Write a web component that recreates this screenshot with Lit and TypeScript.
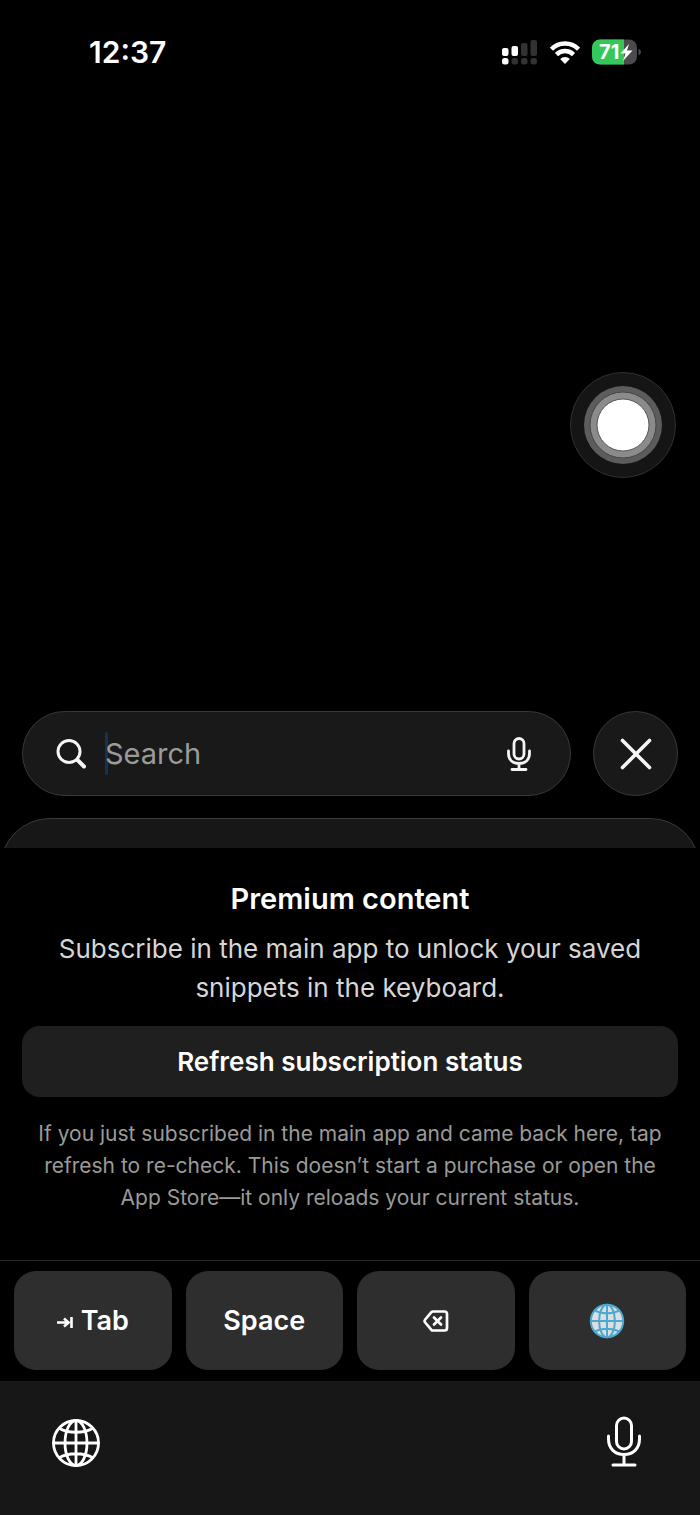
import { LitElement, html, css, svg } from "lit";
import { customElement, state } from "lit/decorators.js";

const micShape = svg`
  <rect x="10.500" y="2" width="15" height="31" rx="7.500"></rect>
  <path d="M2.500 20v3c0 9.500 6.500 15.500 15.500 15.500s15.500-6 15.500-15.500v-3M18 38.500v10M7 49h22"></path>`;

const globeLines = svg`
  <circle cx="25" cy="25" r="22.500"></circle>
  <ellipse cx="25" cy="25" rx="11" ry="22.500"></ellipse>
  <path d="M25 2.500v45M2.500 25h45M8.500 10.500c9 5 24 5 33 0M8.500 39.500c9-5 24-5 33 0"></path>`;

@customElement("status-bar")
export class StatusBar extends LitElement {
  static styles = css`
    :host {
      display: flex;
      justify-content: space-between;
      align-items: center;
      padding: 32px 59px 0 89px;
      height: 40px;
    }
    .time {
      font-size: 30px;
      font-weight: 600;
    }
    .indicators {
      display: flex;
      align-items: center;
      gap: 12px;
    }
    .battery {
      position: relative;
      width: 49px;
      height: 26px;
    }
    .battery svg,
    .signal,
    .wifi {
      display: block;
    }
    .level {
      position: absolute;
      inset: 0 auto 0 7px;
      font-size: 20px;
      line-height: 26px;
      font-weight: 700;
    }
  `;

  render() {
    return html`
      <span class="time">12:37</span>
      <div class="indicators">
        <svg class="signal" width="36" height="26" viewBox="0 0 36 26" fill="#323234" aria-label="Signal">
          <rect x="0" y="9" width="6.500" height="8" rx="2" fill="#fff"></rect>
          <rect x="9.500" y="7" width="6.500" height="10" rx="2" fill="#fff"></rect>
          <rect x="19" y="4" width="6.500" height="13" rx="2"></rect>
          <rect x="28.500" y="1" width="6.500" height="16" rx="2"></rect>
          <rect x="0" y="19" width="6.500" height="6.500" rx="2.500" fill="#fff"></rect>
          <rect x="9.500" y="19" width="6.500" height="6.500" rx="2.500"></rect>
          <rect x="19" y="19" width="6.500" height="6.500" rx="2.500"></rect>
          <rect x="28.500" y="19" width="6.500" height="6.500" rx="2.500"></rect>
        </svg>
        <svg class="wifi" width="30" height="24" viewBox="0 0 30 24" fill="none" stroke="#fff" stroke-width="4.400" aria-label="Wi-Fi">
          <path d="M1.500 9.200a19 19 0 0 1 27 0"></path>
          <path d="M6.500 14.600a12 12 0 0 1 17 0"></path>
          <path d="M15 24l-4.800-5a6.500 6.500 0 0 1 9.600 0z" fill="#fff" stroke="none"></path>
        </svg>
        <div class="battery">
          <svg width="49" height="26" viewBox="0 0 49 26" aria-hidden="true">
            <defs>
              <clipPath id="cell"><rect x="0" y="0.500" width="45" height="25" rx="8"></rect></clipPath>
            </defs>
            <g clip-path="url(#cell)">
              <rect width="45" height="26" fill="#4b4b4d"></rect>
              <rect width="32" height="26" fill="#34c759"></rect>
            </g>
            <path d="M46.500 9.500q2.500 1 2.500 3.500t-2.500 3.500z" fill="#4b4b4d"></path>
            <path d="M37 5l-8.500 9.500h5l-2.500 7.500 9.500-10.500h-5.500z" fill="#fff"></path>
          </svg>
          <span class="level">71</span>
        </div>
      </div>
    `;
  }
}

@customElement("search-bar")
export class SearchBar extends LitElement {
  @state() private query = "";

  static styles = css`
    :host {
      display: flex;
      gap: 22px;
      padding: 0 22px;
    }
    .field {
      flex: 1;
      min-width: 0;
      display: flex;
      align-items: center;
      gap: 17px;
      height: 85px;
      box-sizing: border-box;
      padding: 0 38px 0 33px;
      border: 1px solid #39393a;
      border-radius: 43px;
      background: #191919;
    }
    .entry {
      position: relative;
      flex: 1;
      min-width: 0;
      display: flex;
    }
    .caret {
      position: absolute;
      left: 0;
      top: 0;
      width: 3px;
      height: 43px;
      border-radius: 2px;
      background: #123450;
    }
    .input {
      position: relative;
      width: 100%;
      height: 43px;
      padding: 0;
      border: 0;
      outline: 0;
      background: none;
      color: #fff;
      font: 400 29px Inter, sans-serif;
    }
    .input::placeholder {
      color: #9b9b9b;
      opacity: 1;
    }
    .button {
      display: grid;
      place-items: center;
      padding: 0;
      border: 0;
      background: none;
      color: #f5f5f5;
    }
    .close {
      width: 85px;
      height: 85px;
      border: 1px solid #39393a;
      border-radius: 50%;
      background: #191919;
    }
    .icon {
      display: block;
      flex: none;
      fill: none;
      stroke: #f5f5f5;
      stroke-linecap: round;
    }
  `;

  render() {
    return html`
      <div class="field">
        <svg class="icon" width="32" height="32" viewBox="0 0 32 32" stroke-width="3" aria-hidden="true">
          <circle cx="13" cy="13.500" r="11"></circle>
          <path d="M21.500 22l6.500 6.500" stroke-width="4"></path>
        </svg>
        <div class="entry">
          <span class="caret"></span>
          <input
            class="input"
            type="text"
            aria-label="Search"
            placeholder="Search"
            .value=${this.query}
            @input=${(e: Event) => (this.query = (e.target as HTMLInputElement).value)}
          />
        </div>
        <button class="button" aria-label="Dictate search">
          <svg class="icon" width="26" height="36" viewBox="0 0 26 36" stroke-width="2.800">
            <rect x="8" y="2.500" width="10" height="20.500" rx="5"></rect>
            <path d="M2.500 15v2.500c0 6 4 10 10.500 10s10.500-4 10.500-10V15M13 27.500v5.500M6 33.500h14"></path>
          </svg>
        </button>
      </div>
      <button class="button close" aria-label="Close" @click=${() => (this.query = "")}>
        <svg class="icon" width="32" height="32" viewBox="0 0 32 32" stroke-width="3.600">
          <path d="M2.500 2.500l27 27M29.500 2.500l-27 27"></path>
        </svg>
      </button>
    `;
  }
}

@customElement("premium-panel")
export class PremiumPanel extends LitElement {
  static styles = css`
    :host {
      display: flex;
      flex-direction: column;
      padding: 32px 22px 46px;
      text-align: center;
    }
    .title {
      margin: 0 0 11px;
      font-size: 29px;
      line-height: 38px;
      font-weight: 600;
    }
    .lead {
      margin: 0 auto 19px;
      max-width: 600px;
      font-size: 26px;
      line-height: 39px;
      color: #d6d6d6;
    }
    .refresh {
      height: 71px;
      padding: 0;
      border: 0;
      border-radius: 18px;
      background: #1f1f1f;
      color: #fff;
      font: 600 26px Inter, sans-serif;
    }
    .note {
      margin: 21px auto 0;
      max-width: 640px;
      font-size: 21px;
      line-height: 32px;
      color: #9a9a9a;
    }
  `;

  render() {
    return html`
      <h1 class="title">Premium content</h1>
      <p class="lead">Subscribe in the main app to unlock your saved snippets in the keyboard.</p>
      <button class="refresh">Refresh subscription status</button>
      <p class="note">
        If you just subscribed in the main app and came back here, tap refresh to re-check. This doesn’t start a
        purchase or open the App Store—it only reloads your current status.
      </p>
    `;
  }
}

@customElement("key-row")
export class KeyRow extends LitElement {
  static styles = css`
    :host {
      display: grid;
      grid-template-columns: repeat(4, 1fr);
      gap: 14px;
      padding: 10px 14px 11px;
      border-top: 1px solid #272727;
    }
    .key {
      display: flex;
      align-items: center;
      justify-content: center;
      gap: 8px;
      height: 99px;
      padding: 0;
      border: 0;
      border-radius: 22px;
      background: #2e2e2e;
      color: #fff;
      font: 600 27px Inter, sans-serif;
    }
    .icon {
      display: block;
      fill: none;
    }
  `;

  render() {
    return html`
      <button class="key">
        <svg class="icon" width="16" height="16" viewBox="0 0 16 16" stroke="#fff" stroke-width="2.600" aria-hidden="true">
          <path d="M0 9.500h11M7 5.500l4.500 4-4.500 4M14.500 4v11"></path>
        </svg>
        Tab
      </button>
      <button class="key">Space</button>
      <button class="key" aria-label="Delete">
        <svg class="icon" width="26" height="22" viewBox="0 0 26 22" stroke="#fff" stroke-width="2.700" stroke-linejoin="round" stroke-linecap="round">
          <path d="M10 1.500h11.500q2.500 0 2.500 2.500v14q0 2.500-2.500 2.500H10q-1 0-1.800-.8L2.200 12.500q-1.200-1.500 0-3L8.200 2.300q.8-.8 1.800-.8z"></path>
          <path d="M11 7.500l7 7M18 7.500l-7 7"></path>
        </svg>
      </button>
      <button class="key" aria-label="Next keyboard">
        <svg class="icon" width="36" height="36" viewBox="0 0 50 50" stroke="#4aa9cf" stroke-width="2.800">
          <circle cx="25" cy="25" r="23" fill="#dedee2" stroke="none"></circle>
          ${globeLines}
        </svg>
      </button>
    `;
  }
}

@customElement("system-bar")
export class SystemBar extends LitElement {
  static styles = css`
    :host {
      display: flex;
      justify-content: space-between;
      align-items: flex-start;
      box-sizing: border-box;
      height: 134px;
      padding: 35px 58px 0 51px;
      background: #171717;
    }
    .button {
      padding: 0;
      border: 0;
      background: none;
    }
    .icon {
      display: block;
      fill: none;
      stroke: #fff;
      stroke-linecap: round;
    }
  `;

  render() {
    return html`
      <button class="button" aria-label="Switch keyboard">
        <svg class="icon" width="50" height="54" viewBox="0 -2 50 54" stroke-width="2.800">${globeLines}</svg>
      </button>
      <button class="button" aria-label="Dictation">
        <svg class="icon" width="36" height="51" viewBox="0 0 36 51" stroke-width="3">${micShape}</svg>
      </button>
    `;
  }
}

@customElement("app-root")
export class AppRoot extends LitElement {
  static styles = css`
    :host {
      position: relative;
      display: flex;
      flex-direction: column;
      min-height: 100vh;
      background: #000;
      color: #fff;
      font-family: Inter, sans-serif;
    }
    .content {
      flex: 1;
    }
    .sheet {
      height: 30px;
      margin-top: 22px;
      overflow: hidden;
    }
    .sheet-surface {
      height: 100px;
      box-sizing: border-box;
      border: 1px solid #3a3a3b;
      border-radius: 50px;
      background: #171717;
    }
    .assist {
      position: absolute;
      top: 372px;
      right: 24px;
      width: 106px;
      height: 106px;
      padding: 0;
      border: 0;
      background: none;
    }
    .assist-icon {
      display: block;
    }
  `;

  render() {
    return html`
      <status-bar></status-bar>
      <main class="content"></main>
      <search-bar></search-bar>
      <div class="sheet"><div class="sheet-surface"></div></div>
      <premium-panel></premium-panel>
      <key-row></key-row>
      <system-bar></system-bar>
      <button class="assist" aria-label="AssistiveTouch">
        <svg class="assist-icon" width="106" height="106" viewBox="0 0 106 106">
          <circle cx="53" cy="53" r="52.500" fill="#151515" stroke="#303030"></circle>
          <circle cx="53" cy="53" r="39" fill="#5c5c5c"></circle>
          <circle cx="53" cy="53" r="33" fill="#8b8b8b" stroke="#454545"></circle>
          <circle cx="53" cy="53" r="26" fill="#fff" stroke="#555"></circle>
        </svg>
      </button>
    `;
  }
}
